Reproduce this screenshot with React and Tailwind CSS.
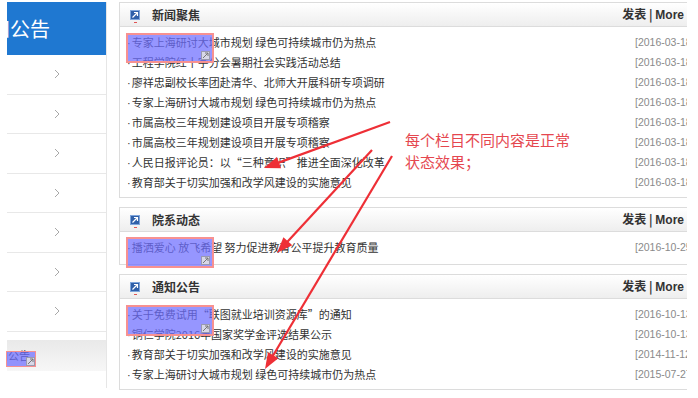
import React from "react";

const CJK = { fontFamily: '"Noto Sans CJK SC", "Noto Sans", sans-serif' };
const LAT = { fontFamily: '"Liberation Sans", Arial, sans-serif' };

const news = [
  "专家上海研讨大城市规划 绿色可持续城市仍为热点",
  "工程学院红十字分会暑期社会实践活动总结",
  "廖祥忠副校长率团赴清华、北师大开展科研专项调研",
  "专家上海研讨大城市规划 绿色可持续城市仍为热点",
  "市属高校三年规划建设项目开展专项稽察",
  "市属高校三年规划建设项目开展专项稽察",
  "人民日报评论员：以“三种意识”推进全面深化改革",
  "教育部关于切实加强和改学风建设的实施意见",
].map((t) => [t, "[2016-03-18]"]);

const dept = [["播洒爱心 放飞希望 努力促进教育公平提升教育质量", "[2016-10-25]"]];

const notices = [
  ["关于免费试用“联图就业培训资源库”的通知", "[2016-10-13]"],
  ["铜仁学院2016年国家奖学金评选结果公示", "[2016-10-13]"],
  ["教育部关于切实加强和改学风建设的实施意见", "[2014-11-12]"],
  ["专家上海研讨大城市规划 绿色可持续城市仍为热点", "[2015-07-27]"],
];

function PanelIcon() {
  return (
    <div className="relative w-[10px] h-[10px]">
      <svg width="10" height="10" viewBox="0 0 10 10">
        <rect x="0" y="0" width="10" height="10" fill="#2f5fa8" />
        <rect x="0.5" y="0.5" width="9" height="9" fill="none" stroke="#7fa6dc" strokeWidth="1" />
        <path d="M2.5 7.5 L7.5 2.5 M4 2.5 H7.5 V6" stroke="#fff" strokeWidth="1.2" fill="none" />
      </svg>
      <div className="absolute left-[4px] top-[12px] w-[3px] h-[1px] bg-[#e05555]" />
    </div>
  );
}

function Panel({ title, items, padBottom = "pb-[4px]" }) {
  return (
    <div className="border border-r-0 border-[#dcdcdc] bg-white">
      <div className="h-[24px] flex items-center bg-linear-to-b from-white to-[#eeeeee] border-b border-[#dcdcdc] pl-[10px] pr-[3px]">
        <PanelIcon />
        <span className="ml-[12px] text-[12px] font-bold text-[#333]" style={CJK}>
          {title}
        </span>
        <div className="flex-1" />
        <span className="text-[12px] font-bold text-[#333] whitespace-nowrap" style={CJK}>
          发表 | <span style={LAT}>More</span>
        </span>
      </div>
      <div className={`pt-[6px] ${padBottom} pl-[7px]`}>
        {items.map(([t, d], i) => (
          <div key={i} className="h-[20px] flex items-center">
            <span className="flex-1 text-[11px] text-[#333] whitespace-nowrap overflow-hidden" style={CJK}>
              <span className="mr-[1px]" style={LAT}>·</span>
              {t}
            </span>
            <span
              className="w-[52px] shrink-0 overflow-hidden whitespace-nowrap text-[10.5px] text-[#8a8a8a]"
              style={LAT}
            >
              {d}
            </span>
          </div>
        ))}
      </div>
    </div>
  );
}

function Chevron() {
  return (
    <svg width="6" height="10" viewBox="0 0 6 10">
      <path d="M1 1 L5 5 L1 9" stroke="#a8a8a8" strokeWidth="1" fill="none" />
    </svg>
  );
}

function SelIcon({ className }) {
  return (
    <svg className={className} width="9" height="9" viewBox="0 0 9 9">
      <rect x="0.5" y="0.5" width="8" height="8" fill="#d8d8e8" stroke="#9a9ab0" />
      <path d="M2 7 L7 2 M4 2 H7 V5" stroke="#777" strokeWidth="1" fill="none" />
    </svg>
  );
}

function Selection({ className }) {
  return (
    <div className={`absolute border-[2px] border-[#f79191] bg-[rgba(110,110,255,0.72)] ${className}`}>
      <SelIcon className="absolute right-[2px] bottom-[1px]" />
    </div>
  );
}

function arrowPoly(x1, y1, x2, y2, len = 16, w = 6) {
  const dx = x2 - x1;
  const dy = y2 - y1;
  const L = Math.hypot(dx, dy);
  const ux = dx / L;
  const uy = dy / L;
  const bx = x2 - ux * len;
  const by = y2 - uy * len;
  const px = -uy;
  const py = ux;
  return `${x2},${y2} ${bx + px * w},${by + py * w} ${bx - px * w},${by - py * w}`;
}

const arrows = [
  [390, 122, 264, 168],
  [372, 150, 277, 253],
  [392, 156, 265, 369],
];

export default function App() {
  return (
    <div className="relative w-[698px] h-[398px] overflow-hidden bg-white flex" style={CJK}>
      {/* Sidebar */}
      <div className="w-[107px] shrink-0 pl-[7px] pt-[2px]">
        <div className="h-[386px] border-r border-[#e6e6e6] flex flex-col">
          <div className="h-[53px] bg-[#1f78d1] overflow-hidden flex items-center">
            <span className="ml-[-37px] text-[20px] text-white whitespace-nowrap leading-none">
              通知公告
            </span>
          </div>
          {Array.from({ length: 7 }).map((_, i) => (
            <div key={i} className="h-[39.5px] border-b border-[#e8e8e8] flex items-center pl-[47px]">
              <Chevron />
            </div>
          ))}
          <div className="h-[39.5px] border-b border-[#e8e8e8] pt-[8px]">
            <div className="h-[31px] bg-linear-to-b from-[#e9e9e9] to-[#f7f7f7] flex items-center overflow-hidden relative">
              <span className="ml-[-10px] text-[11px] text-[#333] whitespace-nowrap">知公告</span>
            </div>
          </div>
        </div>
      </div>

      {/* Main panels */}
      <div className="ml-[12px] w-[568px] shrink-0 pt-[2px] flex flex-col gap-[9px]">
        <Panel title="新闻聚焦" items={news} />
        <Panel title="院系动态" items={dept} padBottom="pb-[6px]" />
        <Panel title="通知公告" items={notices} />
      </div>

      {/* Selection highlights */}
      <Selection className="left-[126px] top-[33px] w-[88px] h-[30px]" />
      <Selection className="left-[126px] top-[237px] w-[88px] h-[31px]" />
      <Selection className="left-[126px] top-[305px] w-[88px] h-[31px]" />
      <div className="absolute left-[6px] top-[351px] w-[30px] h-[16px] border border-[#f79191] bg-[rgba(110,110,255,0.72)]">
        <SelIcon className="absolute right-[0px] bottom-[0px]" />
      </div>

      {/* Annotation */}
      <div className="absolute left-[405px] top-[129px] text-[15px] leading-[22px] text-[#e5474f] whitespace-nowrap">
        <div>每个栏目不同内容是正常</div>
        <div>状态效果；</div>
      </div>

      <svg className="absolute left-0 top-0 pointer-events-none" width="698" height="398">
        {arrows.map(([x1, y1, x2, y2], i) => {
          const L = Math.hypot(x2 - x1, y2 - y1);
          const ex = x2 - ((x2 - x1) / L) * 12;
          const ey = y2 - ((y2 - y1) / L) * 12;
          return (
            <g key={i}>
              <line x1={x1} y1={y1} x2={ex} y2={ey} stroke="#ee2f36" strokeWidth="2.2" />
              <polygon points={arrowPoly(x1, y1, x2, y2)} fill="#ee2f36" />
            </g>
          );
        })}
      </svg>
    </div>
  );
}
